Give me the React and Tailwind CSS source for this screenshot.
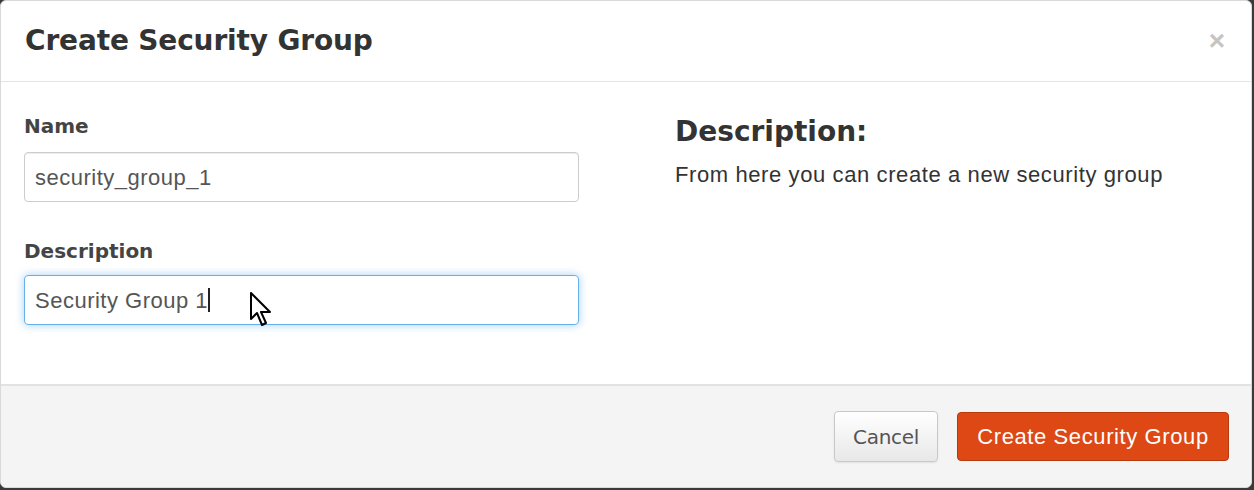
export default function App() {
  return (
    <div className="h-[490px] w-[1254px] overflow-hidden bg-[#3a3a3a]">
      <div className="flex h-[488px] w-[1252px] flex-col overflow-hidden rounded-md border border-[#d9d9d9] bg-white">
        {/* header */}
        <div className="flex h-[81px] shrink-0 items-center justify-between border-b border-[#e5e5e5] pl-[24px] pr-[26px]">
          <h3 className="font-['DejaVu_Sans',sans-serif] text-[28px] font-bold leading-none tracking-[-0.15px] text-[#333]">
            Create Security Group
          </h3>
          <button className="font-['Liberation_Sans',Arial,sans-serif] text-[28px] font-bold leading-none text-[#c4c4c4]">
            ×
          </button>
        </div>

        {/* body */}
        <div className="flex flex-1 pl-[23px] pt-[34px]">
          <div className="flex w-[555px] flex-col">
            <label className="font-['DejaVu_Sans',sans-serif] text-[20px] font-bold leading-none text-[#444]">
              Name
            </label>
            <div className="mt-[16px] flex h-[50px] items-center rounded-[4px] border border-[#cccccc] px-[10px] font-['Liberation_Sans',Arial,sans-serif] text-[22px] tracking-[0.5px] text-[#555] shadow-[inset_0_1px_1px_rgba(0,0,0,0.075)]">
              security_group_1
            </div>
            <label className="mt-[39px] font-['DejaVu_Sans',sans-serif] text-[20px] font-bold leading-none text-[#444]">
              Description
            </label>
            <div className="relative mt-[14px] flex h-[50px] items-center rounded-[4px] border border-[#66afe9] px-[10px] font-['Liberation_Sans',Arial,sans-serif] text-[22px] tracking-[0.5px] text-[#555] shadow-[0_0_8px_rgba(102,175,233,0.6)]">
              Security Group 1
              <span className="inline-block h-[24px] w-[1.5px] bg-[#222]" />
              <svg
                className="absolute left-[224px] top-[16px]"
                width="24"
                height="36"
                viewBox="0 0 24 36"
              >
                <path
                  d="M2 1 L2 27 L8 21 L13 33 L17 31 L12 20 L21 20 Z"
                  fill="white"
                  stroke="black"
                  strokeWidth="2"
                  strokeLinejoin="round"
                />
              </svg>
            </div>
          </div>
          <div className="ml-[96px] flex flex-col pt-[2px]">
            <h4 className="font-['DejaVu_Sans',sans-serif] text-[28px] font-bold leading-none text-[#333]">
              Description:
            </h4>
            <p className="mt-[18px] font-['Liberation_Sans',Arial,sans-serif] text-[22px] leading-none tracking-[0.6px] text-[#333]">
              From here you can create a new security group
            </p>
          </div>
        </div>

        {/* footer */}
        <div className="flex h-[103px] shrink-0 items-center justify-end gap-[19px] border-t-2 border-[#e2e2e2] bg-[#f4f4f4] pr-[22px]">
          <button className="h-[51px] w-[104px] rounded-[4px] border border-[#c8c8c8] bg-gradient-to-b from-white to-[#e8e8e8] font-['DejaVu_Sans',sans-serif] text-[20px] tracking-[-0.3px] text-[#555] shadow-[0_1px_2px_rgba(0,0,0,0.08)]">
            Cancel
          </button>
          <button className="h-[49px] w-[272px] rounded-[4px] border border-[#b83a0e] bg-[#dd4814] font-['Liberation_Sans',Arial,sans-serif] text-[22px] tracking-[0.6px] text-white">
            Create Security Group
          </button>
        </div>
      </div>
    </div>
  );
}
